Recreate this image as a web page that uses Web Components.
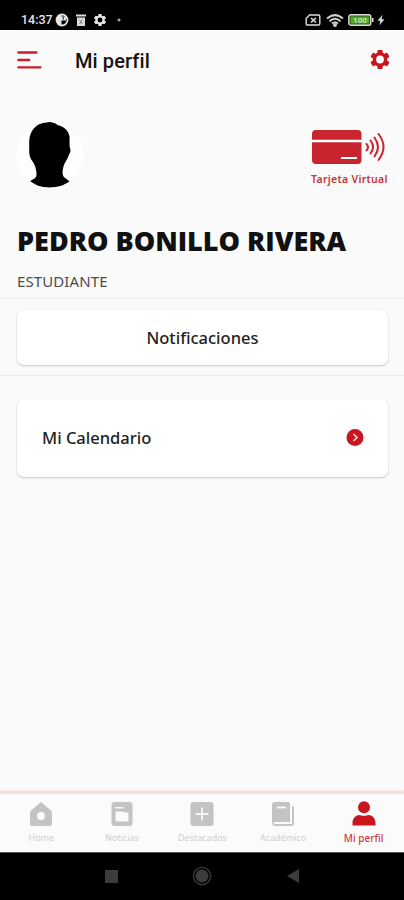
<!DOCTYPE html>
<html lang="es">
<head>
<meta charset="utf-8">
<title>Mi perfil</title>
<style>
body{margin:0;background:#fafafa;font-family:"Noto Sans","Open Sans",sans-serif;color:#111}
</style>
</head>
<body>
<profile-screen></profile-screen>
<script>
const define = (name, html) => customElements.define(name, class extends HTMLElement {
  constructor() {
    super();
    const t = document.createElement('template');
    t.innerHTML = '<style>*{box-sizing:border-box}:host{box-sizing:border-box}svg{display:block;flex:none}</style>' + html;
    this.attachShadow({mode: 'open'}).append(t.content.cloneNode(true));
  }
});
const gear = 'M19.14 12.94c.04-.3.06-.61.06-.94s-.02-.64-.07-.94l2.03-1.58c.18-.14.23-.41.12-.61l-1.92-3.32c-.12-.22-.37-.29-.59-.22l-2.39.96c-.5-.38-1.03-.7-1.62-.94l-.36-2.54c-.04-.24-.24-.41-.48-.41h-3.84c-.24 0-.43.17-.47.41l-.36 2.54c-.59.24-1.13.57-1.62.94l-2.39-.96c-.22-.08-.47 0-.59.22L2.74 8.87c-.12.21-.08.47.12.61l2.03 1.58c-.05.3-.09.63-.09.94s.02.64.07.94l-2.03 1.58c-.18.14-.23.41-.12.61l1.92 3.32c.12.22.37.29.59.22l2.39-.96c.5.38 1.03.7 1.62.94l.36 2.54c.05.24.24.41.48.41h3.84c.24 0 .44-.17.47-.41l.36-2.54c.59-.24 1.13-.56 1.62-.94l2.39.96c.22.08.47 0 .59-.22l1.92-3.32c.12-.22.07-.47-.12-.61l-2.01-1.58zM12 15.9A3.9 3.9 0 1 1 12 8.1a3.9 3.9 0 0 1 0 7.8z';

define('status-bar', `<style>
:host{display:flex;align-items:center;justify-content:space-between;height:30px;padding:10px 21px 0 21px;background:#000;color:#e4e4e4;font:500 12.500px/20px Roboto,sans-serif}
div{display:flex;align-items:center}
.time{width:34px}
</style>
<div><span class="time">14:37</span>
<svg width="14" height="14" viewBox="0 0 14 14"><circle cx="7" cy="7" r="5.500" fill="none" stroke="#e4e4e4" stroke-width="1.800"/><path d="M2 3 5 1.500H6.500V12.500H5L2 11z" fill="#e4e4e4"/><path d="M6 3.500h5v4H6z" fill="#e4e4e4"/><path d="M8.300 4v2.500" stroke="#222"/></svg>
<svg width="12" height="14" viewBox="0 0 12 14" style="margin-left:6px"><path d="M1 1.500h10v2H1zM2 4.500h8V13H2z" fill="#ddd"/><path d="M4.500 6.500 7.500 11M7.500 6.500 4.500 11" stroke="#777" stroke-width=".8"/></svg>
<svg width="14" height="14" viewBox="1 1 22 22" style="margin-left:6px"><path d="${gear}" fill="#e4e4e4"/></svg>
<svg width="4" height="4" viewBox="0 0 4 4" style="margin-left:10px"><circle cx="2" cy="2" r="1.500" fill="#aaa"/></svg></div>
<div>
<svg width="16" height="12" viewBox="0 0 16 12"><path d="M4.500 1h9q1.300 0 1.300 1.300v7.400q0 1.300-1.300 1.300h-11Q1.200 11 1.200 9.700V4.500z" fill="none" stroke="#ddd" stroke-width="1.400"/><path d="m6 4 5 4.500M11 4 6 8.500" stroke="#ddd" stroke-width="1.600"/></svg>
<svg width="18" height="13" viewBox="0 0 18 13" style="margin-left:5px" fill="none" stroke="#ccc" stroke-width="2"><path d="M1 4.600q8-7 16 0M3.500 7.200q5.500-5 11 0M6 9.600q3-2.600 6 0"/><circle cx="9" cy="11" r="1" fill="#ddd"/></svg>
<svg width="26" height="12" viewBox="0 0 26 12" style="margin-left:4px"><rect x=".8" y=".8" width="22" height="10.400" rx="2" fill="#245c12" stroke="#ddd" stroke-width="1.400"/><rect x="2.500" y="2.500" width="18.600" height="7" fill="#53a529"/><path d="M24 4h1.500v4H24z" fill="#ddd"/><text x="12" y="8.800" text-anchor="middle" font-size="8" font-weight="700" fill="#c5e4ae" font-family="Roboto">100</text></svg>
<svg width="8" height="12" viewBox="0 0 8 12" style="margin:0 -2px 0 3px"><path d="M5.600.8.5 6.800h2.800L2.400 11.300 7.500 5.300H4.500z" fill="#ddd"/></svg>
</div>`);

define('app-bar', `<style>
:host{display:flex;align-items:center;height:60px;padding:0 13px 2px 17px;border-top:1px solid #fff}
h1{margin:2px auto 0 33px;font:500 20px/24px Roboto,sans-serif;color:#141414;letter-spacing:.1px}
</style>
<svg width="25" height="20" viewBox="0 0 25 20" stroke="#c8202b" stroke-width="2.300" stroke-linecap="round"><path d="M1.300 2.500h18.200M1.300 10h11M1.300 17.300h22.200"/></svg>
<h1>Mi perfil</h1>
<svg width="22" height="22" viewBox="1 1.500 22 22"><path d="${gear}" fill="#c9161e"/></svg>`);

define('user-avatar', `<style>:host{display:block;width:66px;height:66px;border-radius:50%;background:#fefefe;overflow:hidden}</style>
<svg width="66" height="66" viewBox="0 0 66 66"><path d="M33 0C21-.5 13 8 13 20c0 3 .2 5 0 8 0 6 1.200 8.500 3 11 1.200 2 2.700 4 3.200 7 1.200 5 1.500 8-.5 10-1.300 1.300-4 2-5.300 3.800Q20 65.500 32.500 65.500T52.500 59.800c-1.500-1.800-4.500-3-6-5-1.700-3-1.200-7 0-11 .6-2.500 3.500-6 4.700-10 .5-1.500 1.600-2.500 1.900-5 .2-2-.9-3-.9-5V15C51.500 9 47 4.500 41 3.300 39 1.500 36 0 33 0z" transform="translate(-1.200) scale(1.030 1)"/></svg>`);

define('virtual-card', `<style>
:host{display:flex;flex-direction:column;align-items:flex-start;width:81px;color:#c8323c}
span{font:600 10.500px/14px "Noto Sans",sans-serif;letter-spacing:.3px;white-space:nowrap;margin-top:7px}
</style>
<svg width="76" height="38" viewBox="0 0 76 38"><rect x="1" y="3" width="49.500" height="34" rx="4" fill="#c9252e"/><path d="M0 14h51" stroke="#fff" stroke-width="2.600"/><path d="M30 31h16" stroke="#fff" stroke-width="2"/><g fill="none" stroke="#c9252e" stroke-width="2" stroke-linecap="round"><path d="M55.500 17q3 3.200 0 6.400M59.500 13.500q5 6.500 0 13M63.500 10.500q7 9.500 0 19M67.500 7q10 13 0 26"/></g></svg>
<span>Tarjeta Virtual</span>`);

define('profile-header', `<style>
:host{display:block;padding:32px 12px 0 17px;height:208px}
.top{display:flex;justify-content:space-between}
virtual-card{margin-top:5px}
h2{margin:35px 0 0;font:800 27px/36px "Open Sans",sans-serif;white-space:nowrap}
p{margin:13px 0 0;font:400 15px/18px "Noto Sans",sans-serif;letter-spacing:.1px;color:#4c4c4c}
</style>
<div class="top"><user-avatar></user-avatar><virtual-card></virtual-card></div>
<h2><slot name="name"></slot></h2><p><slot name="role"></slot></p>`);

define('menu-card', `<style>
:host{display:flex;align-items:center;justify-content:center;height:55px;margin:0 16px 0 17px;border-radius:7px;background:#fff;box-shadow:0 1px 2px #0003,0 0 2px #0000000d;font-size:16.500px;font-weight:500;color:#222;padding-bottom:1px}
:host([wide]){height:78px;padding:0 24px 1px 25px;justify-content:space-between}
</style><slot></slot><slot name="end"></slot>`);

define('go-badge', `<style>:host{display:block}</style>
<svg width="18" height="18" viewBox="0 0 18 18"><circle cx="9" cy="8.500" r="8.500" fill="#c9161e"/><path d="m7.500 5 3.500 3.500-3.500 3.500" fill="none" stroke="#fbd9d9" stroke-width="1.600"/></svg>`);

define('tab-item', `<style>
:host{display:flex;flex-direction:column;align-items:center;flex:1;color:#cfcfcf;font:400 9px/12px "Noto Sans",sans-serif}
:host([active]){color:#cc3b44;font-weight:500;font-size:10px}
span{margin-top:5px;white-space:nowrap}
::slotted(svg){display:block}
</style><slot name="icon"></slot><span><slot></slot></span>`);

define('tab-bar', `<style>
:host{display:flex;height:61px;padding:7px 0 0 1px;border-top:3px solid #f8dcde;background:#fbfbfb;box-shadow:0 -1px 2px #f9e5e6}
</style><slot></slot>`);

define('system-nav', `<style>
:host{display:flex;height:48px;padding-bottom:2px;background:#000;justify-content:center;align-items:center;gap:71px;border-top:1px solid #555}
</style>
<svg width="20" height="20" viewBox="0 0 20 20"><path d="M4 4h13v13H4z" fill="#3c3c3c"/></svg>
<svg width="20" height="20" viewBox="0 0 20 20"><circle cx="10" cy="10" r="8.600" fill="none" stroke="#3c3c3c" stroke-width="1.300"/><circle cx="10" cy="10" r="6.500" fill="#3c3c3c"/></svg>
<svg width="20" height="20" viewBox="0 0 20 20"><path d="M16 3v14L4 10z" fill="#3c3c3c"/></svg>`);

define('profile-screen', `<style>
:host{display:flex;flex-direction:column;height:900px;width:404px;background:#fafafa;overflow:hidden}
.band{border:solid #ececec;border-width:1px 0;padding:11px 0 10px}
main{padding-top:23px;flex:1}
</style>
<status-bar></status-bar>
<app-bar></app-bar>
<profile-header><span slot="name">PEDRO BONILLO RIVERA</span><span slot="role">ESTUDIANTE</span></profile-header>
<div class="band"><menu-card>Notificaciones</menu-card></div>
<main><menu-card wide>Mi Calendario<go-badge slot="end"></go-badge></menu-card></main>
<tab-bar>
<tab-item><svg slot="icon" width="24" height="26" viewBox="0 0 24 26"><path fill-rule="evenodd" d="M12 1 22 9.500q1 1 1 2.500v11q0 2-2 2H3q-2 0-2-2V12q0-1.500 1-2.500zM12 11a4 4 0 1 0 0 8 4 4 0 0 0 0-8z" fill="#c3c3c3"/></svg>Home</tab-item>
<tab-item><svg slot="icon" width="24" height="26" viewBox="0 0 24 26"><rect x="1.500" y="1" width="21" height="24" rx="3" fill="#c3c3c3"/><path d="M5.500 10.500h8l1.500 1h3.500v9h-13zM5 6h8.500v1.500H5z" fill="#fafafa"/></svg>Noticias</tab-item>
<tab-item><svg slot="icon" width="24" height="26" viewBox="0 0 24 26"><rect x=".5" y="1" width="23" height="24" rx="3" fill="#c3c3c3"/><path d="M12 6.500v13M5.500 13h13" stroke="#f5f5f5" stroke-width="1.800"/></svg>Destacados</tab-item>
<tab-item><svg slot="icon" width="24" height="26" viewBox="0 0 24 26"><path d="M4 1h13q2 0 2 2v18H4.500q-2 0-2 1t2 1H21V5q2 0 2 2v15q0 3-3 3H5q-4 0-4-3.500V4q0-3 3-3z" fill="#c3c3c3"/><path d="M6 6.500h9" stroke="#fafafa" stroke-width="1.800"/></svg>Académico</tab-item>
<tab-item active><svg slot="icon" width="24" height="26" viewBox="0 0 24 26"><circle cx="12" cy="6.300" r="6" fill="#c9161e"/><path d="M.5 24.500v-2.500c0-5 3.500-8 7-8 2 1 7 1 9 0 3.500 0 7 3 7 8v2.500z" fill="#c9161e"/></svg>Mi perfil</tab-item>
</tab-bar>
<system-nav></system-nav>`);
</script>
</body>
</html>
